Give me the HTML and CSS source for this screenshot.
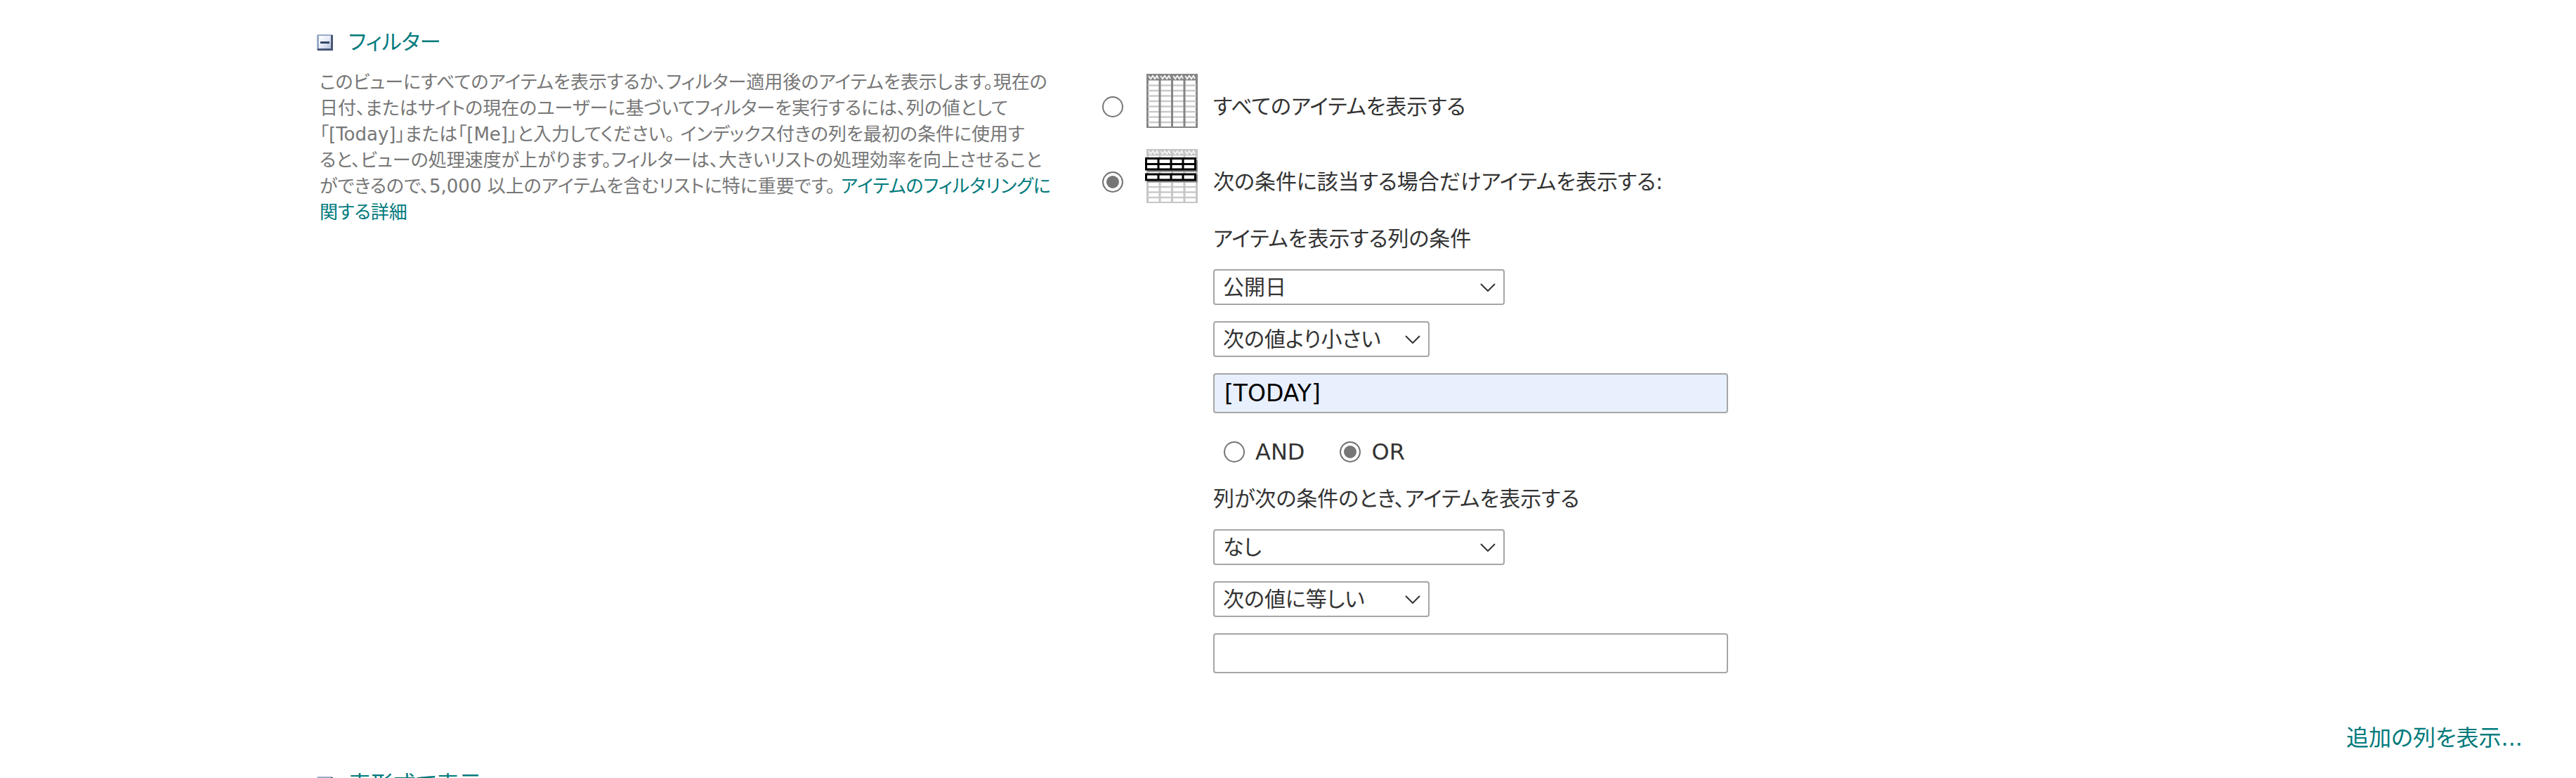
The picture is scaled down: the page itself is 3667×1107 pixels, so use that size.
FILE: index.html
```
<!DOCTYPE html>
<html lang="ja">
<head>
  <meta charset="utf-8">
  <title>ビューの編集</title>
  <link rel="stylesheet" href="styles.css">
</head>
<body>
  <!-- shared pieces of the icons -->
  <svg class="defs" width="0" height="0">
    <defs>
      <linearGradient id="box-fill" x1="0" y1="0" x2="1" y2="1">
        <stop offset="0" stop-color="#ffffff" />
        <stop offset="0.5" stop-color="#e6ebf6" />
        <stop offset="1" stop-color="#b4c1dc" />
      </linearGradient>
      <symbol id="collapse" viewBox="0 0 23 23">
        <rect width="23" height="23" rx="2" fill="#9aabc8" />
        <path d="M1 21.500H21.500V1" fill="none" stroke="#4a5876" stroke-width="3" />
        <rect x="3" y="2" width="17" height="18" fill="url(#box-fill)" />
        <path d="M5 11.500H18" stroke="#35466a" stroke-width="3" />
      </symbol>
      <symbol id="grid" viewBox="0 0 73 77">
        <rect width="73" height="77" fill="currentColor" />
        <path d="M3 9.500H70V75H3Z" fill="#fff" />
        <path d="M2 16.500H71M2 24H71M2 31.500H71M2 39H71M2 46.500H71M2 54H71M2 61.500H71M2 69H71" stroke="#cacaca" stroke-width="2.500" />
        <path d="M19 9V76M36.500 9V76M54 9V76" stroke="currentColor" stroke-width="3" />
        <path d="M3 3L6 7L9 3L12 7L15 3L17 7M20 3L23 7L26 3L29 7L32 3L34 7M38 3L41 7L44 3L47 7L50 3L52 7M55 3L58 7L61 3L64 7L67 3L69 7" fill="none" stroke="#f4f4f4" stroke-width="2" />
      </symbol>
    </defs>
  </svg>

  <section class="section">
    <div class="info">
      <h2 class="title">
        <svg class="toggle"><use href="#collapse" /></svg>
        <a href="#">フィルター</a>
      </h2>
      <p class="description">
        このビューにすべてのアイテムを表示するか、フィルター適用後のアイテムを表示します。現在の<br>
        日付、またはサイトの現在のユーザーに基づいてフィルターを実行するには、列の値として<br>
        「[Today]」または「[Me]」と入力してください。 インデックス付きの列を最初の条件に使用す<br>
        ると、ビューの処理速度が上がります。フィルターは、大きいリストの処理効率を向上させること<br>
        ができるので、5,000 以上のアイテムを含むリストに特に重要です。 <a href="#">アイテムのフィルタリングに<br>
        関する詳細</a>
      </p>
    </div>

    <form class="filter">
      <div class="option">
        <input type="radio" name="show" id="show-all">
        <label for="show-all">
          <svg class="icon" viewBox="0 0 75 77">
            <use href="#grid" class="dark" x="2" width="73" height="77" />
          </svg>
          <span>すべてのアイテムを表示する</span>
        </label>
      </div>
      <div class="option">
        <input type="radio" name="show" id="show-some" checked>
        <label for="show-some">
          <svg class="icon" viewBox="0 0 75 77">
            <use href="#grid" class="light" x="2" width="73" height="77" />
            <path d="M3 31H74V16M3 46H74V36" fill="none" stroke="#8c8c8c" stroke-width="3" />
            <path d="M1.500 13.500H71.500V29H1.500ZM1.500 36H71.500V44H1.500Z" fill="#fff" stroke="#000" stroke-width="3" />
            <path d="M1 21.500H72M19 13V29M37 13V29M54 13V29M19 36V44M37 36V44M54 36V44" stroke="#000" stroke-width="3" />
          </svg>
          <span>次の条件に該当する場合だけアイテムを表示する:</span>
        </label>
      </div>

      <div class="conditions">
        <label class="caption" for="column1">アイテムを表示する列の条件</label>
        <div class="select column">
          <select id="column1"><option>公開日</option></select>
          <svg viewBox="0 0 22 12"><path d="M1 1L11 11L21 1" /></svg>
        </div>
        <div class="select operator">
          <select aria-label="演算子"><option>次の値より小さい</option></select>
          <svg viewBox="0 0 22 12"><path d="M1 1L11 11L21 1" /></svg>
        </div>
        <input type="text" class="value filled" value="[TODAY]" aria-label="値">

        <div class="join">
          <label><input type="radio" name="join">AND</label>
          <label><input type="radio" name="join" checked>OR</label>
        </div>

        <label class="caption" for="column2">列が次の条件のとき、アイテムを表示する</label>
        <div class="select column">
          <select id="column2"><option>なし</option></select>
          <svg viewBox="0 0 22 12"><path d="M1 1L11 11L21 1" /></svg>
        </div>
        <div class="select operator">
          <select aria-label="演算子"><option>次の値に等しい</option></select>
          <svg viewBox="0 0 22 12"><path d="M1 1L11 11L21 1" /></svg>
        </div>
        <input type="text" class="value" aria-label="値">
      </div>
    </form>
  </section>

  <div class="more"><a href="#">追加の列を表示...</a></div>

  <section class="section next">
    <h2 class="title">
      <svg class="toggle"><use href="#collapse" /></svg>
      <a href="#">表形式で表示</a>
    </h2>
  </section>
</body>
</html>
```

FILE: styles.css
```
* {
  margin: 0;
  padding: 0;
  box-sizing: border-box;
}

body {
  height: 100vh;
  overflow: hidden;
  font-family: "DejaVu Sans", "Noto Sans CJK JP", sans-serif;
  font-feature-settings: "palt";
  font-size: 30px;
  line-height: 40px;
  color: #333;
  background-color: #fff;
}

a {
  color: #007a7c;
  text-decoration: none;
}

.defs {
  display: block;
}

.section {
  display: grid;
  grid-template-columns: 1118px 1fr;
  padding: 40px 0 0 451px;
}

.title {
  display: flex;
  align-items: center;
  gap: 22px;
  font-size: 30px;
  font-weight: normal;
}

.toggle {
  width: 23px;
  height: 23px;
}

.description {
  margin-top: 19px;
  padding-left: 4px;
  font-size: 26px;
  line-height: 37px;
  white-space: nowrap;
  color: #777;
}

.filter {
  padding-top: 65px;
}

.option,
.option label {
  display: flex;
  align-items: flex-end;
}

.option {
  gap: 31px;
  margin-bottom: 30px;
}

.option label {
  gap: 22px;
}

.option span {
  margin-bottom: 10px;
}

.option input {
  margin-bottom: 15px;
}

.icon {
  width: 75px;
  height: 77px;
}

.dark {
  color: #858585;
}

.light {
  color: #c6c6c6;
}

input,
select {
  font: inherit;
  font-feature-settings: inherit;
  color: inherit;
  appearance: none;
  background-color: #fff;
}

input[type="radio"] {
  width: 30px;
  height: 30px;
  border: 2px solid #767676;
  border-radius: 50%;
}

input[type="radio"]:checked {
  background-color: #767676;
  box-shadow: inset 0 0 0 4px #fff;
}

.conditions {
  display: flex;
  flex-direction: column;
  align-items: flex-start;
  gap: 23px;
  padding: 1px 0 0 158px;
}

.select {
  position: relative;
  max-width: 100%;
}

.column {
  width: 415px;
}

.operator {
  width: 308px;
}

.select select {
  display: block;
  width: 100%;
  height: 51px;
  padding: 0 12px;
  border: 2px solid #a6a6a6;
  border-radius: 4px;
}

.select svg {
  position: absolute;
  top: 20px;
  right: 13px;
  width: 22px;
  height: 12px;
  fill: none;
  stroke: #333;
  stroke-width: 2;
  pointer-events: none;
}

.value {
  width: 733px;
  max-width: 100%;
  height: 57px;
  padding: 0 14px;
  border: 2px solid #a6a6a6;
  border-radius: 4px;
  font-size: 33px;
}

.filled {
  color: #000;
  background-color: #e8effd;
}

.join {
  display: flex;
  gap: 50px;
  padding: 12px 0 4px 15px;
  font-size: 32px;
}

.join label {
  display: flex;
  align-items: center;
  gap: 15px;
}

.more {
  margin-top: 72px;
  padding-right: 76px;
  font-size: 32px;
  text-align: right;
}

.next {
  padding-top: 26px;
}

.next .title {
  font-size: 32px;
}
```
